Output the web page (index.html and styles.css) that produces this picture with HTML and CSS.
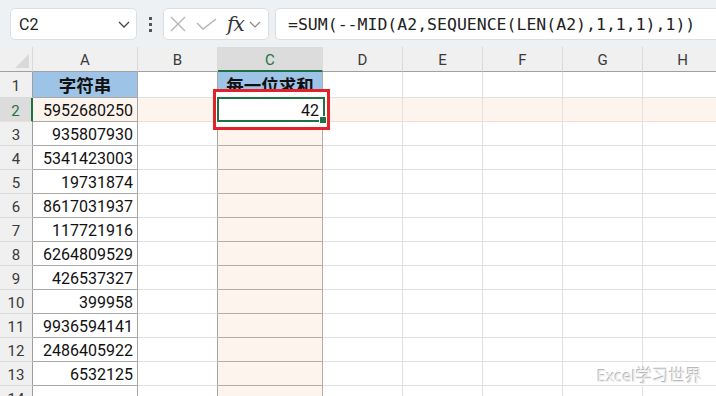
FILE: index.html
```html
<!DOCTYPE html>
<html lang="zh-CN">

<head>
    <meta charset="UTF-8">
    <meta name="viewport" content="width=device-width, initial-scale=1.0">
    <title>每一位求和</title>
    <link rel="stylesheet" href="styles.css">
</head>

<body>
    <div class="toolbar">
        <div class="name-box">
            <span>C2</span>
            <svg class="chevron" width="12" height="7" viewBox="0 0 12 7">
                <path d="M1 1 L6 6 L11 1" fill="none" stroke="#444" stroke-width="1.3" />
            </svg>
        </div>
        <div class="dots"><i></i><i></i><i></i></div>
        <div class="fx-box">
            <svg width="18" height="16" viewBox="0 0 18 16">
                <path d="M2 1 L16 15 M16 1 L2 15" fill="none" stroke="#b4b4b4" stroke-width="1.4" />
            </svg>
            <svg width="21" height="12" viewBox="0 0 21 12">
                <path d="M1 5 L7 11 L20 1" fill="none" stroke="#b4b4b4" stroke-width="1.4" />
            </svg>
            <span class="fx">fx</span>
            <svg width="12" height="7" viewBox="0 0 12 7">
                <path d="M1 1 L6 6 L11 1" fill="none" stroke="#888" stroke-width="1.2" />
            </svg>
        </div>
        <div class="formula-box">=SUM(--MID(A2,SEQUENCE(LEN(A2),1,1,1),1))</div>
    </div>

    <div class="sheet">
        <div class="grid" id="grid">
            <!-- cells are built by the script below -->
        </div>

        <div class="mark-box"></div>
        <div class="active-cell">42<span class="handle"></span></div>

        <div class="watermark">Excel学习世界</div>
    </div>

    <script>
        const columns = ['', 'A', 'B', 'C', 'D', 'E', 'F', 'G', 'H'];
        const values = [
            '5952680250', '935807930', '5341423003', '19731874', '8617031937', '117721916',
            '6264809529', '426537327', '399958', '9936594141', '2486405922', '6532125'
        ];

        const grid = document.getElementById('grid');

        function addCell(className, text) {
            const cell = document.createElement('div');
            cell.className = className;
            cell.textContent = text || '';
            grid.appendChild(cell);
        }

        // Column header row
        columns.forEach((name, i) => {
            let cls = 'col-head';
            if (i === 0) cls += ' corner';
            if (name === 'C') cls += ' active';
            addCell(cls, name);
        });

        // Rows 1 to 14
        for (let row = 1; row <= 14; row++) {
            let rowCls = row === 1 ? ' first-row' : '';
            if (row === 2) rowCls += ' hot-row';

            addCell('row-head' + rowCls + (row === 2 ? ' active' : ''), row);

            for (let c = 1; c < columns.length; c++) {
                const col = columns[c];
                let cls = 'cell col-' + col.toLowerCase() + rowCls;
                let text = '';

                if (col === 'A' && row === 1) {
                    cls += ' title';
                    text = '字符串';
                } else if (col === 'C' && row === 1) {
                    cls += ' title';
                    text = '每一位求和';
                } else if (col === 'A' && row <= 13) {
                    cls += ' data num';
                    text = values[row - 2];
                } else if (col === 'C') {
                    cls += ' data';
                }

                addCell(cls, text);
            }
        }
    </script>
</body>

</html>
```

FILE: styles.css
```css
body {
    margin: 0;
    width: 716px;
    height: 396px;
    overflow: hidden;
    font-family: Roboto, "Noto Sans", sans-serif;
    background-color: white;
}

/* formula bar */

.toolbar {
    height: 47px;
    box-sizing: border-box;
    padding: 8px 0 0 10px;
    display: flex;
    align-items: flex-start;
    background-color: #eef1f4;
}

.name-box,
.fx-box,
.formula-box {
    height: 32px;
    box-sizing: border-box;
    background-color: white;
    border: 1px solid #dcdfe2;
    border-radius: 5px;
    display: flex;
    align-items: center;
}

.name-box {
    width: 127px;
    padding: 0 6px 0 8px;
    justify-content: space-between;
    font-size: 16px;
    color: #222;
}

.dots {
    width: 26px;
    height: 32px;
    display: flex;
    flex-direction: column;
    align-items: center;
    justify-content: center;
    gap: 3px;
}

.dots i {
    width: 3px;
    height: 3px;
    background-color: #555;
}

.fx-box {
    width: 106px;
    padding: 0 2px 0 5px;
    gap: 8px;
}

.fx-box svg:first-child {
    margin-right: 1px;
}

.fx {
    font-family: "DejaVu Serif", "Liberation Serif", serif;
    font-style: italic;
    font-size: 20px;
    color: #333;
    margin-left: 2px;
    margin-right: -3px;
    letter-spacing: -1px;
}

.formula-box {
    flex: 1;
    margin-left: 6px;
    border-right: none;
    border-radius: 5px 0 0 5px;
    padding-left: 12px;
    font-family: "DejaVu Sans Mono", "Liberation Mono", monospace;
    font-size: 16.5px;
    color: #222;
}

/* sheet */

.sheet {
    position: relative;
    height: 349px;
    overflow: hidden;
}

.grid {
    display: grid;
    grid-template-columns: 33px 105px 80px 105px 80px 80px 80px 80px 80px;
    grid-template-rows: 25px 26px repeat(13, 24px);
    width: 723px;
}

.grid > div {
    box-sizing: border-box;
    display: flex;
    align-items: center;
    justify-content: center;
}

.col-head {
    background-color: #f0f0f0;
    border-bottom: 1px solid #a0a0a0;
    border-right: 1px solid #dadada;
    font-size: 15px;
    color: #3a3a3a;
    padding-top: 2px;
}

.col-head.corner {
    position: relative;
}

.col-head.corner::after {
    content: "";
    position: absolute;
    right: 3px;
    bottom: 3px;
    border-left: 14px solid transparent;
    border-bottom: 14px solid #d9d9d9;
}

.col-head.active {
    background-color: #dcdcdc;
    color: #1e7145;
    border-bottom: 2px solid #1e7145;
}

.row-head {
    background-color: #f0f0f0;
    border-right: 1px solid #a0a0a0;
    border-bottom: 1px solid #dadada;
    font-size: 15px;
    color: #3a3a3a;
    padding-top: 2px;
}

.row-head.active {
    background-color: #dcdcdc;
    color: #1e7145;
    border-right: 2px solid #1e7145;
}

.cell {
    border-right: 1px solid #e1e1e1;
    border-bottom: 1px solid #e1e1e1;
}

.hot-row {
    background-color: #fdf4ee;
    border-bottom-color: #ebdfd8;
}

.cell.col-a {
    border-right-color: #a8a8a8;
    border-bottom-color: #a8a8a8;
}

.cell.col-b {
    border-right-color: #aaa4a1;
}

.cell.col-c {
    background-color: #fdf4ee;
    border-right-color: #b5aca7;
    border-bottom-color: #b5aca7;
}

.cell.title {
    background-color: #9dc3e6;
    font-family: "Noto Sans CJK SC", sans-serif;
    font-weight: bold;
    font-size: 17.5px;
    color: #111;
    border-bottom-color: #a8a8a8;
}

.cell.col-b.first-row {
    border-right-color: #a8a8a8;
}

.cell.num {
    justify-content: flex-end;
    padding-right: 4px;
    padding-top: 2px;
    font-size: 16px;
    color: #111;
}

.cell.col-a.hot-row {
    background-color: #fdf4ee;
}

/* selection and annotation */

.mark-box {
    position: absolute;
    left: 213px;
    top: 42px;
    width: 117px;
    height: 41px;
    box-sizing: border-box;
    border: 3px solid #e3212b;
    background-color: white;
}

.active-cell {
    position: absolute;
    left: 217px;
    top: 50px;
    width: 108px;
    height: 25px;
    box-sizing: border-box;
    border: 2px solid #1e7145;
    background-color: white;
    display: flex;
    align-items: center;
    justify-content: flex-end;
    padding: 2px 4px 0 0;
    font-size: 16px;
    color: #111;
}

.handle {
    position: absolute;
    right: -4px;
    bottom: -4px;
    width: 6px;
    height: 6px;
    background-color: #1e7145;
    border: 1px solid white;
}

.watermark {
    position: absolute;
    left: 597px;
    top: 316px;
    font-family: "Noto Sans", "Noto Sans CJK SC", sans-serif;
    font-size: 16.5px;
    color: #ececec;
    text-shadow: -1px -1px 0 #b8b8b8, 1px 1px 0 white;
}
```
